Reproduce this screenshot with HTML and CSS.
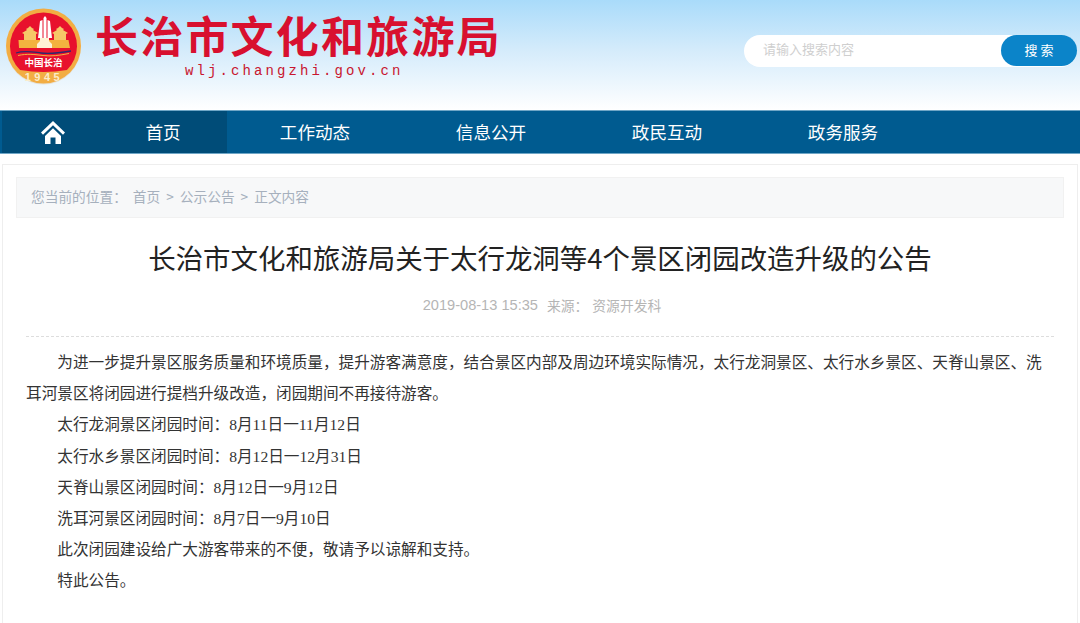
FILE: index.html
```html
<!DOCTYPE html>
<html lang="zh-CN">
<head>
<meta charset="utf-8">
<title>长治市文化和旅游局</title>
<link rel="stylesheet" href="styles.css">
</head>
<body>
<header class="top">
  <div class="brand">
    <svg class="logo" viewBox="0 0 80 80" width="80" height="80" aria-hidden="true">
      <circle cx="40.500" cy="41" r="37.500" fill="#e6e2d8"/>
      <circle cx="40.500" cy="40" r="37.500" fill="#f2ad43"/>
      <path d="M17.100 64A33.500 33.500 0 1 1 63.900 64Q40.500 68 17.100 64z" fill="#e8112d"/>
      <path d="M16 42h51l-1.500-8h-50z" fill="#f3b33f"/>
      <path d="M19 27l5-3-1-1 2-1 2-2 2 2 2 1-1 1 5 3-2 1v6H21v-6z" fill="#f6c668"/>
      <path d="M49 27l5-3-1-1 2-1 2-2 2 2 2 1-1 1 5 3-2 1v6H51v-6z" fill="#f6c668"/>
      <path d="M35 32l2-17 2.500-1v18zM40.500 32V12l1.500-2 1.500 2v20zM44.500 32V14l2.500 1 2 17z" fill="#fff"/>
      <path d="M34 42v-4l3-3v-3h9v3l3 3v4z" fill="#fff3d6"/>
      <path d="M13 47c9-3 17-1 25 0s18 0 30-2" fill="none" stroke="#2c2a6e" stroke-width="1.300"/>
      <path d="M15 49.500c9-2 17-1 25 0s16 0 26-2" fill="none" stroke="#f3b33f" stroke-width="1"/>
      <text x="40.500" y="60" class="logo-cn" text-anchor="middle">中国长治</text>
      <text x="41" y="75" class="logo-year" text-anchor="middle">1945</text>
    </svg>
    <div class="brand-text">
      <div class="brand-name">长治市文化和旅游局</div>
      <div class="brand-url">wlj.changzhi.gov.cn</div>
    </div>
  </div>
  <form class="search">
    <span class="search-hint">请输入搜索内容</span>
    <button class="search-btn" type="button">搜 索</button>
  </form>
</header>

<nav class="nav">
  <a class="nav-home" href="#">
    <svg viewBox="0 0 24 23" width="24" height="23" aria-hidden="true">
      <path d="M12 0L0 11.500l2 2.200L12 4.200l10 9.500 2-2.200z" fill="#fff"/>
      <path d="M4 15L12 7.300 20 15v8h-5.500v-6.500h-5V23H4z" fill="#fff"/>
    </svg>
  </a>
  <a class="nav-item nav-current" href="#">首页</a>
  <a class="nav-item" href="#">工作动态</a>
  <a class="nav-item" href="#">信息公开</a>
  <a class="nav-item" href="#">政民互动</a>
  <a class="nav-item" href="#">政务服务</a>
</nav>

<main class="card">
  <div class="crumbs">
    <span class="crumbs-label">您当前的位置：</span>
    <a href="#">首页</a><i>&gt;</i><a href="#">公示公告</a><i>&gt;</i><a href="#">正文内容</a>
  </div>
  <h1 class="title">长治市文化和旅游局关于太行龙洞等4个景区闭园改造升级的公告</h1>
  <div class="meta"><span class="meta-date">2019-08-13 15:35</span><span class="meta-label">来源：</span><span>资源开发科</span></div>
  <article class="body">
    <p>为进一步提升景区服务质量和环境质量，提升游客满意度，结合景区内部及周边环境实际情况，太行龙洞景区、太行水乡景区、天脊山景区、洗耳河景区将闭园进行提档升级改造，闭园期间不再接待游客。</p>
    <p>太行龙洞景区闭园时间：8月11日一11月12日</p>
    <p>太行水乡景区闭园时间：8月12日一12月31日</p>
    <p>天脊山景区闭园时间：8月12日一9月12日</p>
    <p>洗耳河景区闭园时间：8月7日一9月10日</p>
    <p>此次闭园建设给广大游客带来的不便，敬请予以谅解和支持。</p>
    <p>特此公告。</p>
  </article>
</main>
</body>
</html>
```
FILE: styles.css
```css
* { box-sizing: border-box; }
html, body { margin: 0; height: 623px; overflow: hidden; }
body {
  background: #fff;
  font-family: "Noto Sans CJK SC", "Liberation Sans", sans-serif;
  color: #333;
}
a { color: inherit; text-decoration: none; }

.top {
  height: 110px;
  padding: 6px 3px 0 3px;
  display: flex;
  justify-content: space-between;
  align-items: flex-start;
  background: linear-gradient(#a9dbfa 0, #d4ebfb 45%, #fff 100%);
}
.brand { display: flex; align-items: flex-start; }
.logo { flex: none; }
.logo-cn { font-size: 9.500px; font-weight: 700; fill: #fff; }
.logo-year { font-family: "Liberation Sans", sans-serif; font-size: 11px; font-weight: 700; letter-spacing: 3.500px; fill: #fbeccb; }
.brand-text { margin-left: 12px; width: 408px; }
.brand-name {
  font-size: 43px;
  font-weight: 700;
  letter-spacing: 2.200px;
  line-height: 44px;
  margin-top: 6px;
  color: #d8102f;
  white-space: nowrap;
}
.brand-url {
  font-family: "Liberation Mono", monospace;
  font-size: 14px;
  line-height: 16px;
  letter-spacing: 3.100px;
  color: #c8162f;
  margin: 7px 0 0 90px;
  white-space: nowrap;
}
.search {
  width: 333px;
  height: 32px;
  margin-top: 29px;
  background: #fff;
  border-radius: 16px;
  display: flex;
  align-items: center;
  justify-content: space-between;
  padding-left: 19px;
}
.search-hint { font-size: 13px; line-height: 18px; padding-bottom: 4px; color: #cfcfcf; }
.search-btn {
  width: 76px;
  height: 31px;
  margin-top: -1px;
  padding: 0 0 3px;
  border: 0;
  border-radius: 16px;
  background: #0b84c9;
  color: #fff;
  font: 13px "Noto Sans CJK SC", sans-serif;
}

.nav {
  height: 44px;
  display: flex;
  background: #005b90;
  border-top: 1px solid #6fa6c6;
  border-bottom: 1px solid #6fa6c6;
  color: #fff;
}
.nav-home {
  width: 106px;
  padding-left: 39px;
  display: flex;
  align-items: center;
  background: #004c78;
  border-left: 2px solid #005b90;
}
.nav-item {
  width: 176px;
  text-align: center;
  font-size: 17.600px;
  line-height: 41px;
}
.nav-current { width: 121px; padding-right: 7px; background: #004c78; }

.card {
  margin: 10px 2px 0;
  height: 470px;
  padding: 12px 13px 0;
  border: 1px solid #eee;
  border-bottom: 0;
}
.crumbs {
  height: 41px;
  padding: 0 0 4px 14px;
  display: flex;
  align-items: center;
  background: #f7f8f9;
  border: 1px solid #f1f1f1;
  font-size: 13.700px;
  color: #a6b0bd;
}
.crumbs-label { margin-right: 6px; }
.crumbs i { font-style: normal; margin: 0 6px; }
.title {
  margin: 19px 0 0;
  font-size: 27.450px;
  font-weight: 400;
  line-height: 40px;
  text-align: center;
  color: #222;
}
.meta {
  margin-top: 18px;
  height: 41px;
  display: flex;
  justify-content: center;
  gap: 4px;
  font-size: 13.800px;
  line-height: 20px;
  color: #b5b5b5;
  padding-left: 4px;
}
.meta-date { font-family: "Liberation Sans", sans-serif; font-size: 14.600px; margin-right: 5px; }
.body {
  margin: 0 10px;
  padding-top: 10px;
  border-top: 1px dashed #ddd;
  font-family: "Liberation Serif", "Noto Sans CJK SC", serif;
}
.body p {
  margin: 0;
  font-size: 15.630px;
  line-height: 31.200px;
  text-indent: 2em;
}
```
